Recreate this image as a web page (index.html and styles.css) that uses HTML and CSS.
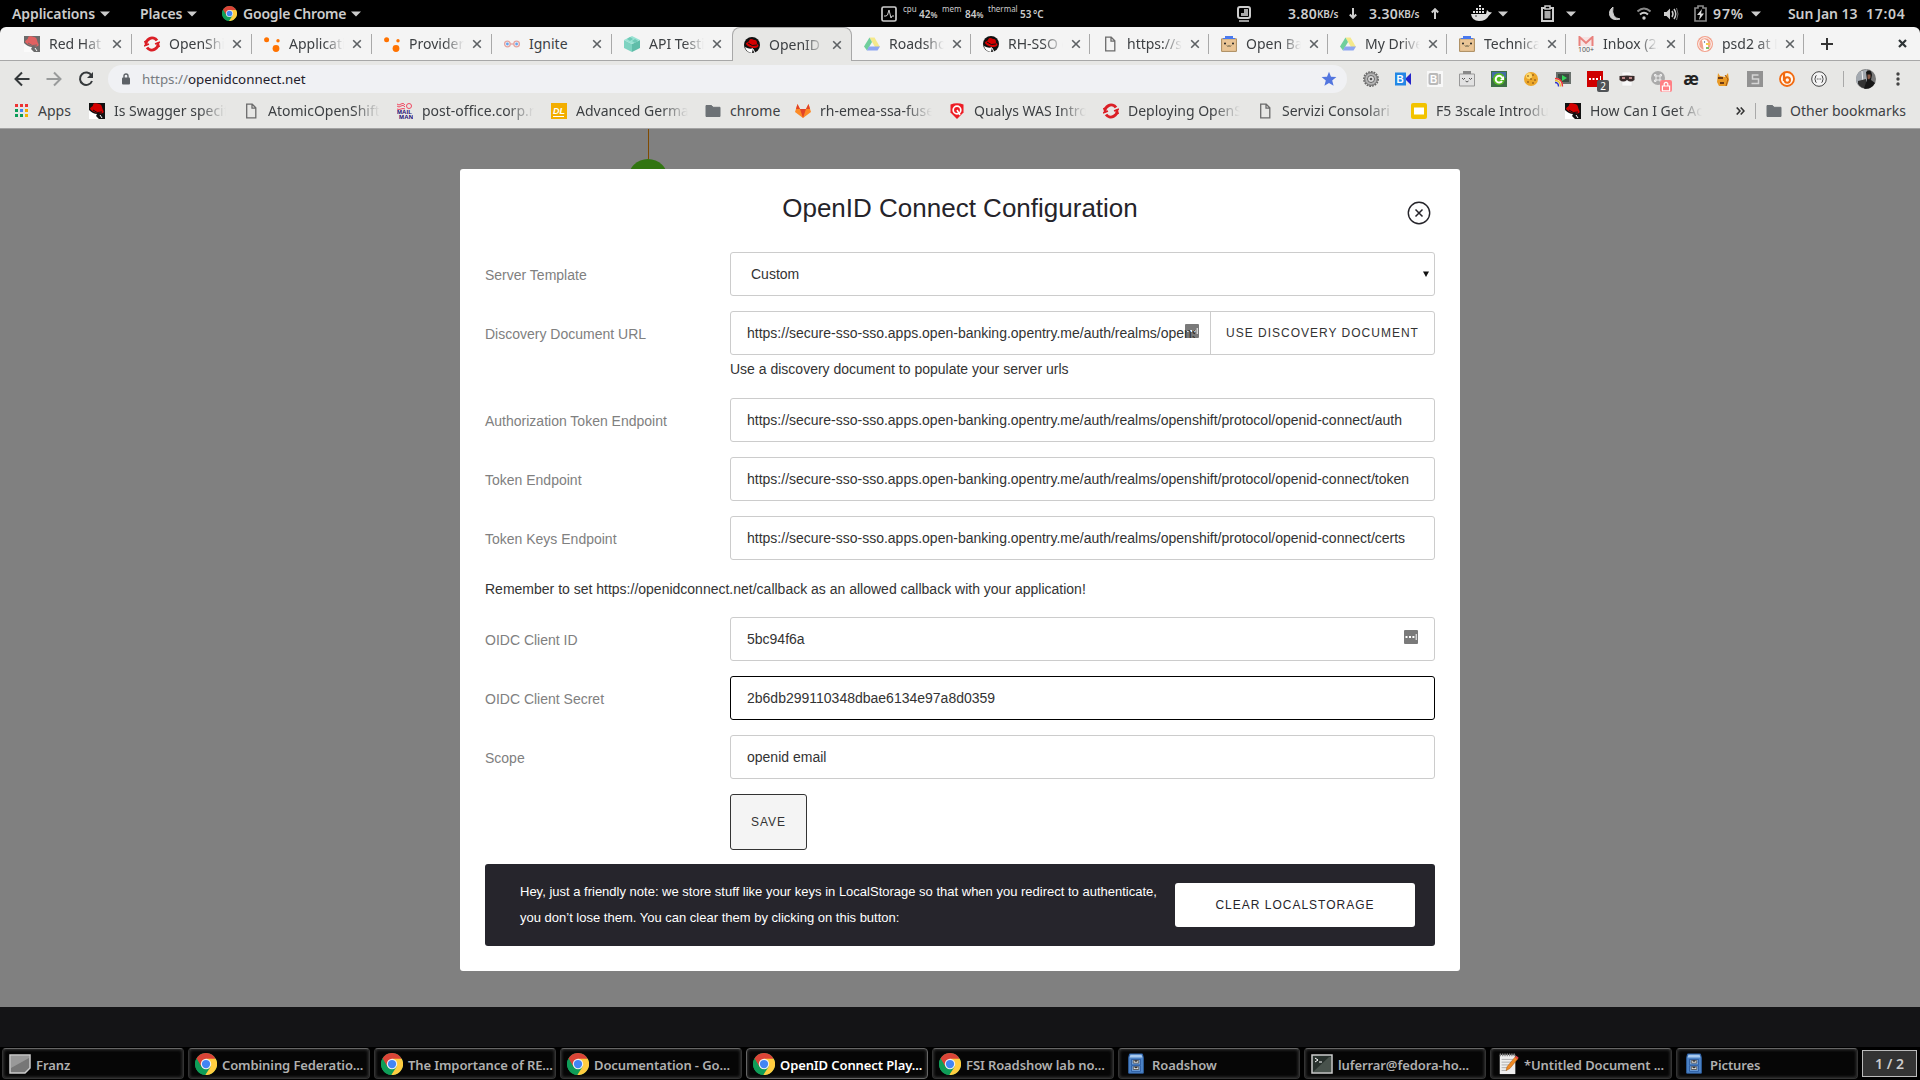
FILE: index.html
```html
<!DOCTYPE html>
<html lang="en">
<head>
<meta charset="utf-8">
<title>OpenID Connect Playground</title>
<link rel="stylesheet" href="styles.css">
</head>
<body>
<svg class="sprite" width="0" height="0">
  <symbol id="chrome" viewBox="0 0 24 24"><circle cx="12" cy="12" r="12" fill="#0f9d58"/><path d="M12 12 1.6 6A12 12 0 0 1 22.4 6z" fill="#db4437"/><path d="M12 6.3H22.6A12 12 0 0 1 11.2 24L17 15z" fill="#ffcd40"/><path d="M1.6 6 7 15l5-3V6z" fill="#db4437"/><path d="M1.6 6 7 15.2 12 18l-1 6A12 12 0 0 1 1.6 6z" fill="#0f9d58"/><circle cx="12" cy="12" r="5.7" fill="#f1f1f1"/><circle cx="12" cy="12" r="4.5" fill="#4285f4"/></symbol>
  <symbol id="redhat" viewBox="0 0 16 16"><path d="M0 0h16v16H0z" fill="#111"/><path d="M0 7q4 4 8 4l-1 2 3 3H0z" fill="#fff"/><path d="M1 6C2 3 4 4 4 2c1-3 4-1 6-1 3 0 3 4 4 6 2 3-1 4-4 3C6 10 3 8 1 6z" fill="#d40000"/><path d="M4 7q4 4 9 2" stroke="#111" fill="none"/><path d="M11 12l2 3" stroke="#fff"/></symbol>
  <symbol id="redhatc" viewBox="0 0 16 16"><circle cx="8" cy="8" r="8" fill="#111"/><path d="M1 10q5 3 8 1l-1 5Q2 15 1 10z" fill="#fff"/><path d="M2 7c0-2 2-1 3-3 1-3 3-2 5-1 3 0 3 2 3 4 3 1 1 4-2 4C7 11 3 9 2 7z" fill="#d40000"/><path d="M4 6q4 4 9 2" stroke="#111" fill="none"/><path d="M9 12l2 4" stroke="#fff"/></symbol>
  <symbol id="openshift" viewBox="0 0 16 16"><path d="M2.3 9.5A6 6 0 0 1 13 4.5M13.7 6.5A6 6 0 0 1 3 11.5" fill="none" stroke="#db1f26" stroke-width="3"/><path d="M0 6l5-2M0 10l5-2M11 8l5-2M11 12l5-2" stroke="#db1f26" stroke-width="1.4"/></symbol>
  <symbol id="dots" viewBox="0 0 16 16"><g fill="#ff7200"><circle cx="2.6" cy="3.7" r="2.5"/><circle cx="14" cy="4.8" r="1.7"/><circle cx="12" cy="12.5" r="3.4"/></g></symbol>
  <symbol id="ignite" viewBox="0 0 16 16"><g fill="none" stroke="#e5a3a0" stroke-width="1.3"><circle cx="3.4" cy="8" r="2.8"/><circle cx="12.6" cy="8" r="2.8"/><path d="M6 8h4"/></g><circle cx="3.4" cy="8" r="1.4" fill="#66a4ee"/><circle cx="12.6" cy="8" r="1.4" fill="#66a4ee"/></symbol>
  <symbol id="cube" viewBox="0 0 16 16"><path d="M0 4l8 4v8l-8-4z" fill="#7ed3c1"/><path d="M16 4 8 8v8l8-4z" fill="#60bda9"/><path d="M0 4l8-4 8 4-8 4z" fill="#99e2d3"/><path d="M3 3l3-2 3 2-3 2zM8 5l3-2 3 2-3 2z" fill="#6fcab7"/></symbol>
  <symbol id="drive" viewBox="0 0 16 16"><path d="M5.5 1.5h5L16 11h-5z" fill="#f5e98b"/><path d="M5.5 1.5 8 6l-5 8.5L0 10.5z" fill="#6fcf9c"/><path d="M5 10.5h11l-2.5 4H2.8z" fill="#8ea6f2"/></symbol>
  <symbol id="file" viewBox="0 0 16 16"><path d="M3.7 1.2h5.5l3.6 3.6v10H3.7zM9 1.2v3.9h3.8" fill="none" stroke="#6b6b6b" stroke-width="1.3"/></symbol>
  <symbol id="face" viewBox="0 0 16 16"><path d="M.6 2.8h14.8v12.6H.6z" fill="#eac596" stroke="#a98a5c"/><path d="M4 0h8v2h2v1H2V2h2z" fill="#4979ee"/><circle cx="4" cy="7.5" r="1" fill="#222"/><circle cx="12" cy="7.5" r="1" fill="#222"/><path d="M6 9.5l1 1 1-1 1 1 1-1" fill="none" stroke="#443"/></symbol>
  <symbol id="mail" viewBox="0 0 16 16"><path d="M1 1h14v9H1z" fill="#f7e4e4"/><path d="M1.5 10V1L8 7l6.5-6v9" fill="none" stroke="#e9817d" stroke-width="2"/><text x="0" y="15.5" class="tiny" textLength="16">100+</text></symbol>
  <symbol id="duck" viewBox="0 0 16 16"><circle cx="8" cy="8" r="8" fill="#f2a28d"/><circle cx="8" cy="8" r="6.3" fill="none" stroke="#fff"/><path d="M5 4q4-2 6 2v8l-4 1z" fill="#fff"/><path d="M9 7h4v2H9z" fill="#f4c84f"/><path d="M9 11h3v2H9z" fill="#7fbd65"/><circle cx="7.5" cy="6" r=".7" fill="#457"/></symbol>
  <symbol id="folder" viewBox="0 0 16 16"><path d="M1 2.5h5.5L8 4.3h7v9.2H1z" fill="#6d7276" stroke="#6d7276" stroke-linejoin="round"/></symbol>
  <symbol id="x" viewBox="0 0 10 10"><path d="M1.2 1.2 8.8 8.8M8.8 1.2 1.2 8.8" stroke="#5d6164" stroke-width="1.6"/></symbol>
  <symbol id="tri" viewBox="0 0 10 6"><path d="M0 .4h10L5 5.6z" fill="#ccc"/></symbol>
  <symbol id="pass" viewBox="0 0 14 14"><rect width="14" height="14" rx="1" fill="#7a7a7a"/><path d="M1.5 6h2v2h-2zM5 6h2v2H5zM8.400 6h2v2h-2zM11.700 4h1v6h-1z" fill="#fff"/></symbol>
  <symbol id="cabinet" viewBox="0 0 20 24"><path d="M3 1h14l1 4v17H2V5z" fill="#4f86ca" stroke="#2f61a5"/><path d="M4 2h12l1 3H3z" fill="#a9caf0"/><path d="M5 7h10v6H5zM5 14h10v6H5z" fill="#74a5df" stroke="#28589b"/><path d="M7 8h6v3H7zM7 15h6v3H7z" fill="#eee" stroke="#555"/><path d="M8.500 8h3v1.500h-3zM8.500 15h3v1.500h-3z" fill="#333"/></symbol>
</svg>

<header class="panel">
  <span class="p-item menu">Applications <svg class="tri"><use href="#tri"/></svg></span>
  <span class="p-item menu">Places <svg class="tri"><use href="#tri"/></svg></span>
  <span class="p-item menu"><svg width="15" height="15"><use href="#chrome"/></svg><span class="app">Google Chrome</span> <svg class="tri"><use href="#tri"/></svg></span>
  <span class="p-item"><svg width="16" height="16" viewBox="0 0 16 16"><rect x="1" y="1" width="14" height="14" rx="1.500" fill="none" stroke="#ccc" stroke-width="1.700"/><path d="M3 10h2l1.500-1L8 4l2 8 1-2h2" fill="none" stroke="#ccc"/></svg></span>
  <span class="p-item stat"><small>cpu</small></span>
  <span class="p-item val">42<i>%</i></span>
  <span class="p-item stat"><small>mem</small></span>
  <span class="p-item val">84<i>%</i></span>
  <span class="p-item stat"><small>thermal</small></span>
  <span class="p-item val">53&thinsp;°C</span>
  <span class="p-item"><svg width="14" height="16" viewBox="0 0 14 16"><rect x="1" y="1" width="12" height="11" rx="2" fill="none" stroke="#ccc" stroke-width="2"/><path d="M7 3h4v7H4V7h3z" fill="#aaa"/><path d="M2 15h10" stroke="#ccc" stroke-width="1.500"/></svg></span>
  <span class="p-item net">3.80<i>KB/s</i></span>
  <span class="p-item"><svg width="8" height="11" viewBox="0 0 8 11"><path d="M4 0v9M.8 6.500 4 9.800l3.200-3.300" fill="none" stroke="#ccc" stroke-width="2"/></svg></span>
  <span class="p-item net">3.30<i>KB/s</i></span>
  <span class="p-item"><svg width="8" height="11" viewBox="0 0 8 11"><path d="M4 11V2M.8 4.500 4 1.200l3.200 3.300" fill="none" stroke="#ccc" stroke-width="2"/></svg></span>
  <span class="p-item"><svg width="21" height="17" viewBox="0 0 21 17"><path d="M0 9h15l1-4 2 2 3 .5-3 3Q15 16 8 16 1 16 0 9z" fill="#ddd"/><path d="M2 6h2v2H2zM5 6h2v2H5zM8 6h2v2H8zM11 6h2v2h-2zM5 3h2v2H5zM8 3h2v2H8zM11 3h2v2h-2zM8 0h2v2H8z" fill="#ddd"/><circle cx="5" cy="11" r=".7"/></svg></span>
  <span class="p-item"><svg class="tri"><use href="#tri"/></svg></span>
  <span class="p-item"><svg width="13" height="17" viewBox="0 0 13 17"><path d="M1 3h11v13H1z" fill="none" stroke="#ccc" stroke-width="2"/><path d="M4 1h5v3H4z" fill="#000" stroke="#ccc" stroke-width="1.500"/><path d="M3.500 6h6v7.500h-6z" fill="#aaa"/></svg></span>
  <span class="p-item"><svg class="tri"><use href="#tri"/></svg></span>
  <span class="p-item"><svg width="12" height="15" viewBox="0 0 12 15"><path d="M4 1Q-1 5 1 10t10 3Q2 12 4 1z" fill="#ccc" stroke="#ccc"/></svg></span>
  <span class="p-item"><svg width="14" height="13" viewBox="0 0 14 13"><path d="M.5 4.500Q7-1.500 13.500 4.500" stroke="#888" fill="none" stroke-width="2"/><path d="M3 7.500Q7 4 11 7.500" stroke="#ccc" fill="none" stroke-width="2"/><circle cx="7" cy="11" r="1.700" fill="#ccc"/></svg></span>
  <span class="p-item"><svg width="15" height="14" viewBox="0 0 15 14"><path d="M0 5h2.500L6 1.500v11L2.500 9H0z" fill="#ccc"/><path d="M8 4q2 3 0 6M10 2q3.500 5 0 10" stroke="#ccc" fill="none" stroke-width="1.500"/><path d="M12.500 1q3 6 0 12" stroke="#777" fill="none"/></svg></span>
  <span class="p-item"><svg width="13" height="17" viewBox="0 0 13 17"><path d="M4 1h5v2h3v13H1V3h3z" fill="none" stroke="#888" stroke-width="1.700"/><path d="M8 4 3 10h3l-1 5 5-6.500H7z" fill="#ddd"/></svg></span>
  <span class="p-item menu pct">97%</span>
  <span class="p-item"><svg class="tri"><use href="#tri"/></svg></span>
  <span class="p-item menu date">Sun Jan 13</span>
  <span class="p-item menu time">17:04</span>
</header>

<nav class="tabs">
  <div class="tab"><svg class="ico faded"><use href="#redhat"/></svg><span>Red Hat Customer</span><svg class="x"><use href="#x"/></svg></div>
  <div class="tab"><svg class="ico"><use href="#openshift"/></svg><span>OpenShift</span><svg class="x"><use href="#x"/></svg></div>
  <div class="tab"><svg class="ico"><use href="#dots"/></svg><span>Applications</span><svg class="x"><use href="#x"/></svg></div>
  <div class="tab"><svg class="ico"><use href="#dots"/></svg><span>Providers</span><svg class="x"><use href="#x"/></svg></div>
  <div class="tab"><svg class="ico"><use href="#ignite"/></svg><span class="full">Ignite</span><svg class="x"><use href="#x"/></svg></div>
  <div class="tab before"><svg class="ico"><use href="#cube"/></svg><span>API Testing</span><svg class="x"><use href="#x"/></svg></div>
  <div class="tab active"><svg class="ico"><use href="#redhatc"/></svg><span>OpenID Connect</span><svg class="x"><use href="#x"/></svg></div>
  <div class="tab narrow"><svg class="ico"><use href="#drive"/></svg><span>Roadshow</span><svg class="x"><use href="#x"/></svg></div>
  <div class="tab narrow"><svg class="ico"><use href="#redhatc"/></svg><span>RH-SSO demo</span><svg class="x"><use href="#x"/></svg></div>
  <div class="tab narrow"><svg class="ico"><use href="#file"/></svg><span>https://secure</span><svg class="x"><use href="#x"/></svg></div>
  <div class="tab narrow"><svg class="ico"><use href="#face"/></svg><span>Open Banking</span><svg class="x"><use href="#x"/></svg></div>
  <div class="tab narrow"><svg class="ico"><use href="#drive"/></svg><span>My Drive - G</span><svg class="x"><use href="#x"/></svg></div>
  <div class="tab narrow"><svg class="ico"><use href="#face"/></svg><span>Technical</span><svg class="x"><use href="#x"/></svg></div>
  <div class="tab narrow"><svg class="ico"><use href="#mail"/></svg><span>Inbox (22)</span><svg class="x"><use href="#x"/></svg></div>
  <div class="tab narrow"><svg class="ico"><use href="#duck"/></svg><span>psd2 at Duck</span><svg class="x"><use href="#x"/></svg></div>
  <svg class="plus" width="12" height="12" viewBox="0 0 12 12"><path d="M6 0v12M0 6h12" stroke="#333" stroke-width="2"/></svg>
  <svg class="winx" width="9" height="9" viewBox="0 0 9 9"><path d="M1 1l7 7M8 1 1 8" stroke="#2e3436" stroke-width="2.200"/></svg>
</nav>

<div class="toolbar">
  <svg width="16" height="16" viewBox="0 0 16 16"><path d="M15.500 8H2M8 1.500 1.500 8 8 14.500" fill="none" stroke="#35393b" stroke-width="2"/></svg>
  <svg width="16" height="16" viewBox="0 0 16 16"><path d="M.5 8H14M8 1.500 14.500 8 8 14.500" fill="none" stroke="#999b9b" stroke-width="2"/></svg>
  <svg width="16" height="16" viewBox="0 0 16 16"><path d="M13.500 4.500A6.200 6.200 0 1 0 14 10" fill="none" stroke="#35393b" stroke-width="2"/><path d="M15 1v6H9z" fill="#35393b"/></svg>
  <div class="omnibox">
    <svg width="8" height="12" viewBox="0 0 8 12"><rect y="4.500" width="8" height="7" rx="1" fill="#5d6166"/><path d="M2 5V3a2 2 0 0 1 4 0v2" fill="none" stroke="#5d6166" stroke-width="1.400"/></svg>
    <span class="url"><i>https://</i>openidconnect.net</span>
    <svg class="star" width="16" height="16" viewBox="0 0 16 16"><path d="M8 .8l2 5 5.400.3-4.200 3.500 1.400 5.200L8 11.900l-4.600 2.900 1.400-5.200L.6 6.100 6 5.800z" fill="#5275df"/></svg>
  </div>
  <div class="exts">
    <svg viewBox="0 0 16 16"><circle cx="8" cy="8" r="6.300" fill="#b5b5b5" stroke="#666"/><circle cx="8" cy="8" r="7.200" fill="none" stroke="#666" stroke-width="1.500" stroke-dasharray="1.800 1"/><circle cx="8" cy="8" r="3.500" fill="#ddd" stroke="#666"/><circle cx="8" cy="8" r="1.300" fill="#555"/></svg>
    <svg viewBox="0 0 16 16"><path d="M0 1.500h11v13H0z" fill="#2386e5"/><path d="M11 7l5-5v12l-5-5z" fill="#2424ca"/><text x="1.500" y="12" class="glyph" fill="#fff">B</text></svg>
    <svg viewBox="0 0 16 16"><path d="M0 0h16v16H0z" fill="#f8f8f8"/><rect x="1.500" y="2" width="10" height="12" rx="2" fill="#b9b9b9"/><path d="M13 3v10" stroke="#c4c4c4" stroke-width="2"/><text x="3" y="12" class="glyph" fill="#fff">B</text></svg>
    <svg viewBox="0 0 16 16"><path d="M.5 3h15v12H.5z" fill="#e2e2e2" stroke="#999"/><path d="M4 0h8v3H4z" fill="#888"/><path d="M3 7q1.500 3 3 0M10 7q1.500 3 3 0M6.500 10l1.500 1 1.500-1" fill="none" stroke="#555"/></svg>
    <svg viewBox="0 0 16 16"><path d="M0 0h16v16H0z" fill="#3d7045"/><path d="M1 1h14v6H1z" fill="#456ca5"/><circle cx="8" cy="8" r="6" fill="#54ba22"/><path d="M11.300 7A3.400 3.400 0 1 0 11 10" stroke="#fff" stroke-width="2" fill="none"/><path d="M13 5v4H9z" fill="#fff"/></svg>
    <svg viewBox="0 0 16 16"><circle cx="8" cy="8" r="7" fill="#eca72a"/><circle cx="6" cy="5" r="3" fill="#ffd96b"/><g fill="#704214"><circle cx="5" cy="5" r=".8"/><circle cx="10" cy="4" r=".8"/><circle cx="8" cy="8" r=".8"/><circle cx="12" cy="9" r=".8"/><circle cx="5" cy="11" r=".8"/><circle cx="10" cy="12" r=".8"/></g></svg>
    <svg viewBox="0 0 16 16"><path d="M1 1h15v12H1z" fill="#69706c"/><path d="M3 3h11v8H3z" fill="#3a4c41"/><path d="M7 4l5 3-5 3z" fill="#35d55b"/><path d="M0 7q8 0 8 9H0z" fill="#e7e7e5"/><path d="M0 7.500q7.500 0 7.500 8" fill="none" stroke="#e33" stroke-width="1.300"/><path d="M0 9.500q5.500 0 5.500 6" fill="none" stroke="#e8c22c" stroke-width="1.300"/><path d="M0 11.500q3.500 0 3.500 4" fill="none" stroke="#33c" stroke-width="1.300"/></svg>
    <div class="ext-badge"><svg viewBox="0 0 16 16"><path d="M0 0h16v16H0z" fill="#cf0000"/><path d="M2 7h2v2H2zM5.500 7h2v2h-2zM9 7h2v2H9zM13 5h1v6h-1z" fill="#fff"/></svg><b>2</b></div>
    <svg viewBox="0 0 16 16"><path d="M3 1h8l2 2v12H3z" fill="#f8f8f8" stroke="#ddd" stroke-width=".5"/><path d="M.5 5q7.500-1 15 0v4q-4 3-7.500 0-3.500 3-7.500 0z" fill="#392b2b"/><path d="M3 7h3M10 7h3" stroke="#e7a7a7" stroke-width="1.500"/></svg>
    <div class="ext-badge"><svg viewBox="0 0 16 16"><circle cx="7" cy="7" r="7" fill="#aaa"/><path d="M5 5h4v4H5zM5 5H3.500V3.500H5zM9 5h1.500V3.500H9zM5 9H3.500v1.500H5zM9 9h1.500v1.500H9z" stroke="#eee" fill="none"/></svg><b class="lock"><svg viewBox="0 0 10 10"><path d="M2 5h6v4H2zM3.500 5V3q1.500-2 3 0v2" stroke="#fff" fill="none"/></svg></b></div>
    <span class="ae">æ</span>
    <svg viewBox="0 0 16 16"><path d="M3 2l2 3 5 1 3-4 1 7-2 6H4L2 11z" fill="#e99a27"/><path d="M3 6h5v2H3zM5 11h4v2H5z" fill="#703c14"/><path d="M10 4l3 4-2 7" fill="none" stroke="#a35a15"/></svg>
    <svg viewBox="0 0 16 16"><path d="M0 0h16v16H0z" fill="#929292"/><path d="M11.500 4h-6v4h6v4.500h-7" stroke="#d5d5d5" fill="none" stroke-width="1.500"/></svg>
    <svg viewBox="0 0 16 16"><circle cx="8" cy="8" r="7" fill="#fff8f0" stroke="#f26a10" stroke-width="1.800"/><path d="M5 2v8" stroke="#f26a10" stroke-width="2.200"/><circle cx="8.300" cy="9" r="2.700" fill="none" stroke="#f26a10" stroke-width="2"/></svg>
    <svg viewBox="0 0 16 16"><circle cx="8" cy="8" r="7.300" fill="#f4f4f4" stroke="#444"/><path d="M5.500 4.500q-1 0-1 1.500t-1 2q1 .5 1 2t1 1.500M10.500 4.500q1 0 1 1.500t1 2q-1 .5-1 2t-1 1.500" stroke="#444" fill="none"/><path d="M5.800 8h4.400" stroke="#444" stroke-dasharray="1 .7"/></svg>
  </div>
  <div class="vsep"></div>
  <svg class="avatar" width="20" height="20" viewBox="0 0 20 20"><circle cx="10" cy="10" r="10" fill="#777"/><path d="M3 3l8-3v13L2 16A10 10 0 0 1 3 3z" fill="#a3a9b0"/><path d="M6 2l1 12" stroke="#eee"/><path d="M2 12l8-2v9.500Q5 19 2 15z" fill="#333"/><path d="M10 3q5-4 6 3l-1 5 4 3q-4 7-11 5.500l3-9z" fill="#161616"/><path d="M11.500 5.500h3v3l-1.500 2-1.500-1z" fill="#8a5b49"/></svg>
  <svg class="kebab" width="4" height="16" viewBox="0 0 4 16"><g fill="#444"><circle cx="2" cy="3" r="1.700"/><circle cx="2" cy="8" r="1.700"/><circle cx="2" cy="13" r="1.700"/></g></svg>
</div>

<div class="bookmarks">
  <div class="bm apps"><svg class="ico" viewBox="0 0 16 16"><path d="M2 1h3v3H2z" fill="#e33"/><path d="M7 1h3v3H7zM12 1h3v3h-3z" fill="#e33"/><path d="M2 6h3v3H2z" fill="#0b9d58"/><path d="M7 6h3v3H7z" fill="#4285f4"/><path d="M12 6h3v3h-3z" fill="#f4a900"/><path d="M2 11h3v3H2zM7 11h3v3H7z" fill="#0b9d58"/><path d="M12 11h3v3h-3z" fill="#f4b400"/></svg><span>Apps</span></div>
  <div class="bm"><svg class="ico"><use href="#redhat"/></svg><span class="fade">Is Swagger specific</span></div>
  <div class="bm"><svg class="ico"><use href="#file"/></svg><span class="fade">AtomicOpenShift</span></div>
  <div class="bm"><svg class="ico" viewBox="0 0 16 16"><path d="M0 1q2 2 4 0t4 1M0 3q2 2 4 0t4 1M0 6q2 1 4 0t4 0" stroke="#f04962" fill="none"/><circle cx="12" cy="3" r="2.500" fill="none" stroke="#f04962"/><text x="0" y="10.800" class="mm" textLength="15">MAIL</text><text x="2" y="16" class="mm" textLength="14">MAN</text></svg><span class="fade">post-office.corp.redhat</span></div>
  <div class="bm"><svg class="ico" viewBox="0 0 16 16"><path d="M0 0h16v16H0z" fill="#f3ae00"/><text x="2" y="11" class="dl" textLength="12">DL</text><path d="M2 13.500h11" stroke="#fff"/></svg><span class="fade">Advanced German</span></div>
  <div class="bm short"><svg class="ico"><use href="#folder"/></svg><span>chrome</span></div>
  <div class="bm"><svg class="ico" viewBox="0 0 16 16"><path d="M0 9l2.500-8L5 6h6l2.500-5L16 9l-8 6z" fill="#fc8a26"/><path d="M5 6h6l-3 9z" fill="#e24329"/><path d="M2.500 1 5 6H1zM13.500 1 11 6h4z" fill="#e24329"/></svg><span class="fade">rh-emea-ssa-fuse</span></div>
  <div class="bm"><svg class="ico" viewBox="0 0 16 16"><path d="M1.500 1.500Q8-1 14.500 1.500v8L8 16 1.500 9.500z" fill="#ed1c24"/><circle cx="8" cy="7" r="3.800" fill="none" stroke="#fff" stroke-width="1.700"/><path d="M8 7l3 5" stroke="#fff" stroke-width="1.500"/></svg><span class="fade">Qualys WAS Introdu</span></div>
  <div class="bm"><svg class="ico"><use href="#openshift"/></svg><span class="fade">Deploying OpenShift</span></div>
  <div class="bm"><svg class="ico"><use href="#file"/></svg><span class="fade">Servizi Consolari -</span></div>
  <div class="bm"><svg class="ico" viewBox="0 0 16 16"><rect width="16" height="16" rx="2" fill="#f2c300"/><path d="M3 4.500h10v7H3z" fill="#fff"/></svg><span class="fade">F5 3scale Introduct</span></div>
  <div class="bm last"><svg class="ico"><use href="#redhat"/></svg><span class="fade">How Can I Get Access</span></div>
  <svg class="more" width="9" height="8" viewBox="0 0 9 8"><path d="M.7.5 4 4 .7 7.500M4.700.5 8 4 4.700 7.500" fill="none" stroke="#333" stroke-width="1.600"/></svg>
  <div class="vsep"></div>
  <div class="bm other"><svg class="ico"><use href="#folder"/></svg><span>Other bookmarks</span></div>
</div>

<main class="page">
  <div class="step"><div class="line"></div><div class="dot"></div></div>
  <section class="modal">
    <h1>OpenID Connect Configuration</h1>
    <svg class="close" width="24" height="24" viewBox="0 0 24 24"><circle cx="12" cy="12" r="10.700" fill="none" stroke="#25242a" stroke-width="1.400"/><path d="M8.500 8.500l7 7M15.500 8.500l-7 7" stroke="#25242a" stroke-width="1.500"/></svg>
    <div class="row"><label>Server Template</label><div class="field select">Custom<svg width="6" height="6" viewBox="0 0 6 6"><path d="M0 .5h6L3 6z" fill="#111"/></svg></div></div>
    <div class="row"><label>Discovery Document URL</label><div class="field split"><svg class="pass over" width="14" height="14"><use href="#pass"/></svg><span class="clip">https://secure-sso-sso.apps.open-banking.opentry.me/auth/realms/openshift</span><span class="btn">USE DISCOVERY DOCUMENT</span></div></div>
    <p class="help">Use a discovery document to populate your server urls</p>
    <div class="row"><label>Authorization Token Endpoint</label><div class="field">https://secure-sso-sso.apps.open-banking.opentry.me/auth/realms/openshift/protocol/openid-connect/auth</div></div>
    <div class="row"><label>Token Endpoint</label><div class="field">https://secure-sso-sso.apps.open-banking.opentry.me/auth/realms/openshift/protocol/openid-connect/token</div></div>
    <div class="row"><label>Token Keys Endpoint</label><div class="field">https://secure-sso-sso.apps.open-banking.opentry.me/auth/realms/openshift/protocol/openid-connect/certs</div></div>
    <p class="remember">Remember to set https://openidconnect.net/callback as an allowed callback with your application!</p>
    <div class="row"><label>OIDC Client ID</label><div class="field">5bc94f6a<svg class="pass end" width="14" height="14"><use href="#pass"/></svg></div></div>
    <div class="row"><label>OIDC Client Secret</label><div class="field focus">2b6db299110348dbae6134e97a8d0359</div></div>
    <div class="row"><label>Scope</label><div class="field">openid email</div></div>
    <div class="save">SAVE</div>
    <div class="note"><p>Hey, just a friendly note: we store stuff like your keys in LocalStorage so that when you redirect to authenticate,<br>you don’t lose them. You can clear them by clicking on this button:</p><div class="clear">CLEAR LOCALSTORAGE</div></div>
  </section>
</main>
<div class="band"></div>

<footer class="taskbar">
  <div class="task"><svg width="22" height="20" viewBox="0 0 22 20"><path d="M1 1h20v13l-5 5H1z" fill="#777" stroke="#ccc" stroke-width="1.500"/><path d="M2 14 20 4V2H2z" fill="#999"/></svg><span>Franz</span></div>
  <div class="task"><svg><use href="#chrome"/></svg><span>Combining Federatio...</span></div>
  <div class="task"><svg><use href="#chrome"/></svg><span>The Importance of RE...</span></div>
  <div class="task"><svg><use href="#chrome"/></svg><span>Documentation - Go...</span></div>
  <div class="task on"><svg><use href="#chrome"/></svg><span>OpenID Connect Play...</span></div>
  <div class="task"><svg><use href="#chrome"/></svg><span>FSI Roadshow lab no...</span></div>
  <div class="task"><svg><use href="#cabinet"/></svg><span>Roadshow</span></div>
  <div class="task"><svg viewBox="0 0 22 20"><path d="M1 1h20v18H1z" fill="#27302c" stroke="#ccc" stroke-width="1.500"/><path d="M2 18 18 3h2v15z" fill="#48524c"/><path d="M4 4l3 2-3 2M8 8h3" stroke="#fff" fill="none"/></svg><span>luferrar@fedora-ho...</span></div>
  <div class="task"><svg viewBox="0 0 22 24"><path d="M2 2h17v21H2z" fill="#eee"/><path d="M2 2h17" stroke="#888" stroke-width="3" stroke-dasharray="1.500 1"/><path d="M4 7h13M4 10h13M4 13h9M4 16h8M4 19h6" stroke="#aaa"/><path d="M9 19l1-4L19 4l3 2-9 11z" fill="#f08a24" stroke="#a75a10" stroke-width=".6"/><path d="M18.500 5l1.500-2 2.500 2-1 2z" fill="#d44"/></svg><span>*Untitled Document ...</span></div>
  <div class="task"><svg><use href="#cabinet"/></svg><span>Pictures</span></div>
  <div class="pager">1 / 2</div>
</footer>
</body>
</html>
```
FILE: styles.css
```css
* { box-sizing: border-box; }
body {
  margin: 0;
  width: 1920px;
  height: 1080px;
  overflow: hidden;
  background: #000;
  font-family: "Noto Sans", sans-serif;
  display: flex;
  flex-direction: column;
}
svg { display: block; flex: none; }
.sprite { position: absolute; }
.tiny { font: 7px "Noto Sans", sans-serif; fill: #555; }
.glyph { font: bold 10px "Liberation Sans", sans-serif; }
.mm { font: bold 6px "Liberation Sans", sans-serif; fill: #230d73; }
.dl { font: italic bold 9px "Liberation Sans", sans-serif; fill: #fff; }

/* desktop top panel */
.panel {
  height: 27px;
  background: #000;
  color: #ccc;
  display: grid;
  align-items: center;
  padding-left: 12px;
  grid-template-columns: 128px 82px 659px 22px 16px 23px 23px 23px 32px 217px 51px 61px 20px 62px 40px 27px 43px 25px 43px 28px 27px 30px 19px 38px 37px 78px 51px;
}
.p-item { display: flex; align-items: center; white-space: nowrap; height: 27px; }
.menu { font-size: 14px; font-weight: 600; letter-spacing: -0.1px; }
.menu .tri { margin-left: 5px; }
.app { margin-left: 6px; letter-spacing: -0.2px; }
.tri { width: 10px; height: 6px; }
.stat small { font-size: 8px; padding-bottom: 11px; }
.val { font-size: 10px; font-weight: 600; }
.val i { font-style: normal; font-size: 8px; padding-top: 1px; }
.net { font-size: 14px; font-weight: 600; letter-spacing: 0.3px; }
.net i { font-style: normal; font-size: 10px; letter-spacing: -0.2px; }
.pct { letter-spacing: 0.9px; }
.date { letter-spacing: -0.1px; }
.time { letter-spacing: 0.7px; }

/* browser tab strip */
.tabs {
  height: 34px;
  background: #f4f4f4;
  border-bottom: 1px solid #a8a8a8;
  border-radius: 6px 6px 0 0;
  display: flex;
  align-items: center;
  padding-left: 12px;
  color: #3d4043;
  font-size: 14px;
}
.tab {
  width: 120px;
  height: 20px;
  padding: 0 0 0 12px;
  border-right: 1px solid #a9a9a9;
  display: flex;
  align-items: center;
  flex: none;
}
.tab.narrow { width: 119px; }
.tab.before { border-right-color: transparent; }
.tab.active {
  height: 34px;
  background: #e7e7e5;
  border: 1px solid #a8a8a8;
  border-bottom: 0;
  border-radius: 8px 8px 0 0;
  padding-left: 11px;
  margin-bottom: -1px;
}
.tab span {
  width: 55px;
  flex: none;
  margin: 0 8px 0 9px;
  overflow: hidden;
  white-space: nowrap;
  -webkit-mask-image: linear-gradient(90deg, #000 64%, transparent);
  mask-image: linear-gradient(90deg, #000 64%, transparent);
}
.tab .full { -webkit-mask-image: none; mask-image: none; }
.ico { width: 16px; height: 16px; }
.faded { opacity: 0.6; }
.x { width: 10px; height: 10px; }
.plus { margin-left: 17px; }
.winx { margin-left: auto; margin-right: 13px; }

/* address bar */
.toolbar {
  height: 36px;
  background: #e7e7e5;
  display: flex;
  align-items: center;
  padding-left: 14px;
  gap: 16px;
}
.omnibox {
  width: 1239px;
  height: 28px;
  margin-left: -2px;
  border-radius: 14px;
  background: #f0f1f4;
  display: flex;
  align-items: center;
  padding: 0 10px 0 14px;
  font-size: 13.35px;
}
.url { margin-left: 12px; color: #23202b; }
.url i { font-style: normal; color: #777b80; }
.star { margin-left: auto; }
.exts { display: flex; align-items: center; gap: 16px; width: 464px; }
.exts > svg, .ext-badge { width: 16px; height: 16px; flex: none; }
.ext-badge { position: relative; }
.ext-badge b {
  position: absolute;
  left: 10px;
  top: 9px;
  width: 12px;
  height: 12px;
  border-radius: 2px;
  background: #505357;
  color: #fff;
  font: 10px/12px "Noto Sans", sans-serif;
  text-align: center;
}
.ext-badge .lock { background: #ff8085; left: 9px; }
.ae { width: 16px; font-size: 17px; font-weight: 700; line-height: 16px; color: #222; display: flex; justify-content: center; }
.vsep { width: 1px; height: 16px; background: #a9a9a9; flex: none; }
.avatar { margin-left: -4px; }
.kebab { margin-left: 4px; }

/* bookmarks bar */
.bookmarks {
  height: 32px;
  background: #e7e7e5;
  border-bottom: 1px solid #a3a3a3;
  display: flex;
  align-items: center;
  padding: 0 0 4px 13px;
  font-size: 14px;
  color: #3d4043;
}
.bm { width: 154px; display: flex; align-items: center; gap: 9px; white-space: nowrap; flex: none; }
.bm.apps { width: 76px; gap: 9px; }
.bm.short { width: 90px; }
.bm.last { width: 171px; }
.bm.other { width: 150px; margin-left: 10px; gap: 8px; }
.fade {
  width: 112px;
  overflow: hidden;
  -webkit-mask-image: linear-gradient(90deg, #000 76%, transparent);
  mask-image: linear-gradient(90deg, #000 76%, transparent);
}
.bookmarks .vsep { margin-left: 10px; }

/* page behind and configuration dialog */
.page {
  height: 878px;
  background: #808080;
  padding-left: 460px;
  font-family: "Liberation Sans", Arial, sans-serif;
  font-size: 14px;
  color: #333;
}
.step { height: 40px; width: 376px; display: flex; flex-direction: column; align-items: center; overflow: hidden; }
.line { width: 1px; height: 30px; margin-left: 1px; background: #7f4a00; flex: none; }
.dot { width: 40px; height: 40px; border-radius: 50%; background: #317511; flex: none; }
.modal {
  position: relative;
  width: 1000px;
  height: 802px;
  background: #fff;
  border-radius: 3px;
  padding: 22px 25px 25px;
}
h1 { margin: 0 0 27px; height: 34px; font-size: 26px; line-height: 34px; font-weight: 400; text-align: center; color: #25242a; }
.close { position: absolute; left: 946.700px; top: 31.700px; }
.row { display: flex; height: 44px; margin-bottom: 15px; }
label { width: 245px; padding-top: 1px; line-height: 44px; color: #808080; }
.field {
  flex: 1;
  border: 1px solid #ccc;
  border-radius: 3px;
  padding: 0 16px;
  display: flex;
  align-items: center;
  line-height: 42px;
  white-space: nowrap;
  overflow: hidden;
}
.select { padding: 0 5px 0 20px; justify-content: space-between; }
.split { padding-right: 0; position: relative; }
.clip { width: 448px; overflow: hidden; position: relative; }
.split .btn {
  margin-left: auto;
  width: 224px;
  height: 42px;
  border-left: 1px solid #ccc;
  text-align: center;
  font-size: 12px;
  letter-spacing: 1px;
}
.over { position: absolute; left: 454px; top: 12px; }
.end { margin-left: auto; margin-top: -4px; }
.focus { border-color: #000; }
.help { margin: -9px 0 20px 245px; line-height: 17px; height: 17px; }
.remember { margin: 0 0 19px; height: 23px; line-height: 29px; }
.save {
  width: 77px;
  height: 56px;
  margin-left: 245px;
  border: 1px solid #333;
  border-radius: 3px;
  background: #f4f4f4;
  text-align: center;
  line-height: 54px;
  font-size: 12px;
  letter-spacing: 1px;
}
.note {
  margin-top: 14px;
  height: 82px;
  background: #26252c;
  border-radius: 3px;
  color: #fff;
  display: flex;
  align-items: center;
  justify-content: space-between;
  padding: 0 20px 0 35px;
  font-size: 13px;
  line-height: 26px;
}
.note p { margin: 0; white-space: nowrap; }
.clear {
  width: 240px;
  height: 44px;
  border-radius: 3px;
  background: #fff;
  color: #25242a;
  text-align: center;
  line-height: 44px;
  font-size: 12px;
  letter-spacing: 1px;
}
.band { height: 40px; background: #141416; }

/* window list */
.taskbar { height: 33px; background: #000; padding: 1px 0 0 2px; display: flex; gap: 4px; }
.task {
  width: 182px;
  height: 31px;
  border: 1px solid #333;
  border-top-color: #666;
  border-radius: 4px;
  background: #060606;
  box-shadow: inset 0 0 3px 1px #333;
  display: flex;
  align-items: center;
  gap: 5px;
  padding: 2px 0 0 6px;
  font-size: 13px;
  font-weight: 600;
  letter-spacing: -0.1px;
  color: #b0b0b0;
  white-space: nowrap;
}
.task svg { width: 22px; height: 22px; margin-top: -2px; }
.task.on { color: #fff; border-color: #666; }
.pager {
  width: 55px;
  height: 27px;
  margin-top: 2px;
  border: 1px solid #bbb;
  background: #333;
  color: #ccc;
  text-align: center;
  font-size: 14px;
  font-weight: 600;
  line-height: 25px;
}
```
